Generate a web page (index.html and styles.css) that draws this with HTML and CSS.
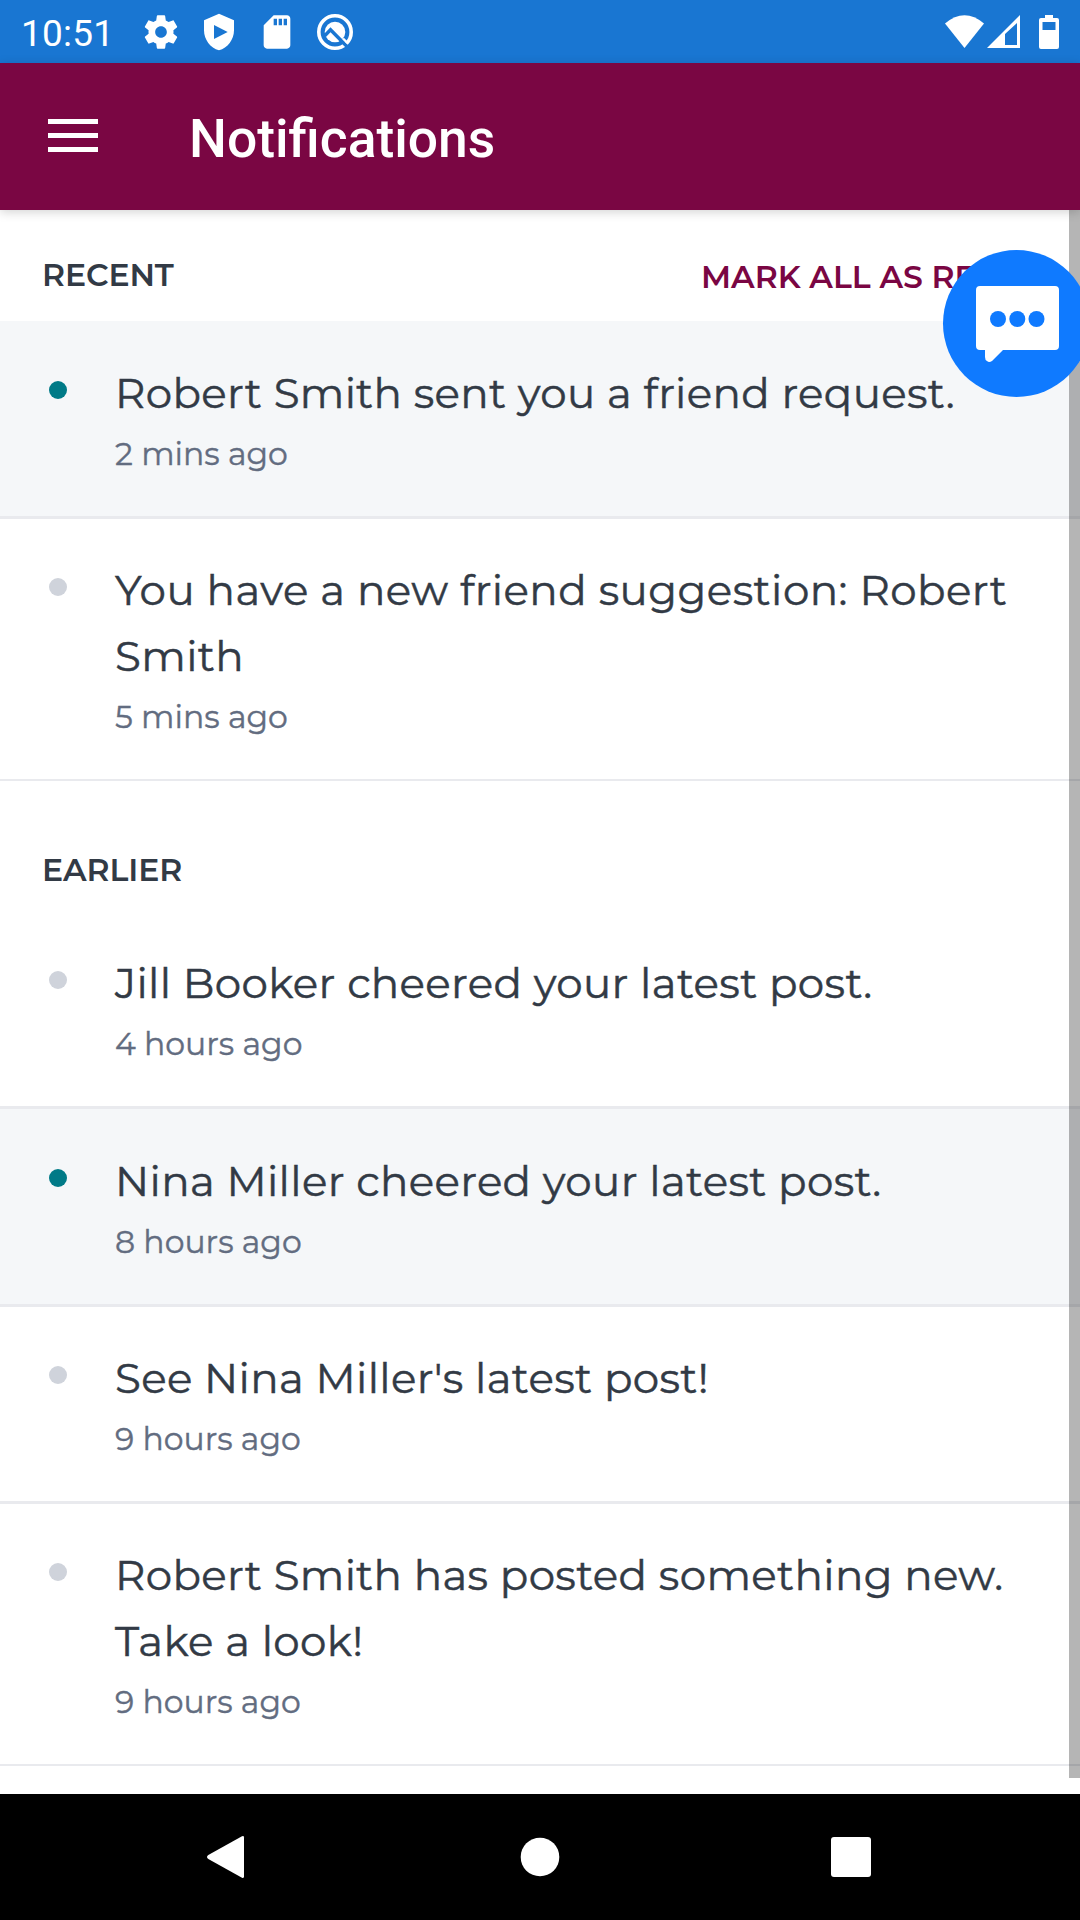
FILE: index.html
```
<!DOCTYPE html>
<html lang="en">
<head>
<meta charset="utf-8">
<title>Notifications</title>
<link rel="stylesheet" href="styles.css">
</head>
<body>
<div class="screen">
  <header class="status">
    <span class="clock">10:51</span>
    <div class="status-left">
      <svg class="ico" viewBox="0 0 24 24"><path d="M19.43 12.98c.04-.32.07-.64.07-.98s-.03-.66-.07-.98l2.11-1.65c.19-.15.24-.42.12-.64l-2-3.46c-.12-.22-.39-.3-.61-.22l-2.49 1c-.52-.4-1.08-.73-1.69-.98l-.38-2.65C14.46 2.18 14.25 2 14 2h-4c-.25 0-.46.18-.49.42l-.38 2.65c-.61.25-1.17.59-1.69.98l-2.49-1c-.23-.09-.49 0-.61.22l-2 3.46c-.13.22-.07.49.12.64l2.11 1.65c-.04.32-.07.65-.07.98s.03.66.07.98l-2.11 1.65c-.19.15-.24.42-.12.64l2 3.46c.12.22.39.3.61.22l2.49-1c.52.4 1.08.73 1.69.98l.38 2.65c.03.24.24.42.49.42h4c.25 0 .46-.18.49-.42l.38-2.65c.61-.25 1.17-.59 1.69-.98l2.49 1c.23.09.49 0 .61-.22l2-3.46c.12-.22.07-.49-.12-.64l-2.11-1.65zM12 15.5c-1.93 0-3.5-1.57-3.5-3.5s1.57-3.5 3.5-3.5 3.500 1.570 3.500 3.500-1.570 3.500-3.500 3.500z"/></svg>
      <svg class="ico" viewBox="0 0 24 24"><path fill-rule="evenodd" d="M12 1L3 5v6c0 5.550 3.840 10.740 9 12 5.160-1.260 9-6.450 9-12V5zM9 7.800l8.200 4.200L9 16.200z"/></svg>
      <svg class="ico" viewBox="0 0 24 24"><path d="M18 2h-8L4.020 8 4 20c0 1.100.9 2 2 2h12c1.100 0 2-.9 2-2V4c0-1.100-.9-2-2-2zm-6 6h-2V4h2v4zm3 0h-2V4h2v4zm3 0h-2V4h2v4z"/></svg>
      <svg class="ico" viewBox="0 0 40 40"><circle cx="20" cy="20" r="16.200" fill="none" stroke="#fff" stroke-width="3.600"/><circle cx="20" cy="20" r="10.300"/><path d="M9.500 24l6-6.200L32 34.500" fill="none" stroke="#1976d2" stroke-width="3.400"/><path d="M28 26.500l4.500 4.500" fill="none" stroke="#fff" stroke-width="2.400"/></svg>
    </div>
    <div class="status-right">
      <svg class="wifi" viewBox="0 0 39 33"><path d="M0 8.500Q19.500-8 39 8.500L19.500 33z"/></svg>
      <svg class="signal" viewBox="0 0 33 33"><path fill-rule="evenodd" d="M33 0v33H0zM30 8L18 19v11h12z"/></svg>
      <svg class="battery" viewBox="0 0 20 34"><path fill-rule="evenodd" d="M6 0h8v3h4q2 0 2 2v27q0 2-2 2H2q-2 0-2-2V5q0-2 2-2h4zM3.500 7v8h13V7z"/></svg>
    </div>
  </header>
  <div class="appbar">
    <div class="menu"><i></i><i></i><i></i></div>
    <h1>Notifications</h1>
  </div>
  <main class="content">
    <div class="head recent"><h2>RECENT</h2><span class="mark">MARK ALL AS READ</span></div>
    <article class="item unread"><i class="dot"></i><div><p class="title">Robert Smith sent you a friend request.</p><p class="time">2 mins ago</p></div></article>
    <article class="item thin"><i class="dot"></i><div><p class="title wide">You have a new friend suggestion: Robert<br>Smith</p><p class="time">5 mins ago</p></div></article>
    <div class="head earlier"><h2>EARLIER</h2></div>
    <article class="item"><i class="dot"></i><div><p class="title">Jill Booker cheered your latest post.</p><p class="time">4 hours ago</p></div></article>
    <article class="item unread"><i class="dot"></i><div><p class="title">Nina Miller cheered your latest post.</p><p class="time">8 hours ago</p></div></article>
    <article class="item short"><i class="dot"></i><div><p class="title">See Nina Miller's latest post!</p><p class="time">9 hours ago</p></div></article>
    <article class="item thin"><i class="dot"></i><div><p class="title">Robert Smith has posted something new.<br>Take a look!</p><p class="time">9 hours ago</p></div></article>
    <div class="scrollbar"></div>
  </main>
  <nav class="navbar">
    <svg viewBox="0 0 44 44"><path d="M37 2.500v39q0 2-2 1.200L1.300 24q-2.600-2 0-4L35 1.300q2-.8 2 1.200z"/></svg>
    <svg viewBox="0 0 44 44"><circle cx="22" cy="22" r="19.300"/></svg>
    <svg viewBox="0 0 44 44"><rect x="2" y="2" width="40" height="40" rx="3"/></svg>
  </nav>
  <div class="chat"><svg viewBox="0 0 84 78"><path fill="#fff" d="M4 0h75q4 0 4 4v56q0 4-4 4H27L16 75q-3 2-5 0-2-1-2-4v-7H4q-4 0-4-4V4q0-4 4-4z"/><g fill="#0f7aff"><circle cx="22" cy="33" r="8"/><circle cx="41.300" cy="33" r="8"/><circle cx="60.500" cy="33" r="8"/></g></svg></div>
</div>
</body>
</html>
```
FILE: styles.css
```
* { box-sizing: border-box; margin: 0; padding: 0; }
body { background: #fff; }
.screen { position: relative; width: 1080px; height: 1920px; overflow: hidden; display: flex; flex-direction: column; font-family: Montserrat, Inter, sans-serif; color: #323a45; }
svg { display: block; fill: #fff; }
.status { height: 63px; background: #1976d2; display: flex; align-items: center; color: #fff; padding: 0 21px 0 21px; }
.clock { font: 400 37px/63px Roboto, sans-serif; width: 120px; letter-spacing: .2px; padding-top: 3px; }
.status-left { display: flex; gap: 18px; }
.ico { width: 40px; height: 40px; }
.status-right { display: flex; margin-left: auto; align-items: center; }
.wifi { width: 39px; height: 33px; margin-right: 3px; }
.signal { width: 33px; height: 33px; margin-right: 19px; }
.battery { width: 20px; height: 34px; }
.appbar { position: relative; z-index: 1; height: 147px; background: #7a0643; display: flex; align-items: center; padding-left: 48px; box-shadow: 0 2px 10px rgba(0,0,0,.18); }
.menu { width: 50px; display: flex; flex-direction: column; gap: 9px; margin-top: -2px; }
.menu i { height: 5px; background: #fff; }
h1 { font: 500 53.4px/60px Roboto, sans-serif; color: #fff; margin-left: 91px; padding-top: 5px; }
.content { position: relative; flex: 1; background: #fff; }
.head { display: flex; padding-left: 42px; }
.recent { height: 111px; padding-top: 45px; justify-content: space-between; }
.earlier { height: 130px; padding-top: 69px; }
h2, .mark { font-size: 31.5px; line-height: 40px; font-weight: 600; white-space: nowrap; }
h2 { letter-spacing: -.1px; }
.mark { color: #7a0643; width: 379px; margin-top: 2px; }
.item { display: flex; padding: 39px 0 0 49px; height: 198px; border-bottom: 3px solid #e9eaee; }
.item.short { height: 197px; padding-top: 38px; }
.item.thin { height: 262px; padding-top: 38px; border-bottom-width: 2px; }
.unread { background: #f5f7f9; }
.dot { width: 18px; height: 18px; border-radius: 50%; background: #cfd3db; margin: 21px 48px 0 0; flex: none; }
.unread .dot { background: #007a87; }
.title { font-size: 42px; line-height: 66px; font-weight: 400; letter-spacing: .37px; -webkit-text-stroke: .5px currentColor; white-space: nowrap; }
.title.wide { letter-spacing: .47px; }
.time { font-size: 31.5px; line-height: 44px; font-weight: 400; -webkit-text-stroke: .4px currentColor; color: #626c80; margin-top: 6px; }
.scrollbar { position: absolute; right: 0; top: 0; width: 11px; height: 1568px; background: rgba(0,0,0,.29); }
.navbar { height: 126px; background: #000; display: flex; justify-content: space-between; align-items: center; padding: 0 207px; }
.navbar svg { width: 44px; height: 44px; }
.chat { position: absolute; left: 943px; top: 250px; width: 147px; height: 147px; border-radius: 50%; background: #0f7aff; padding: 36px 0 0 33px; }
.chat svg { width: 84px; height: 78px; }
```
